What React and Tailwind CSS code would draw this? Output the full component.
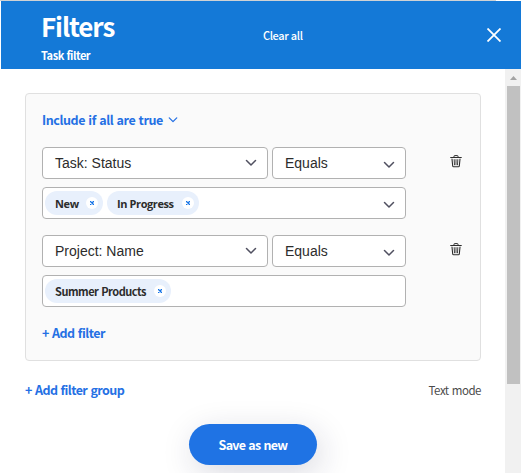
import React from "react";

const CLEAN = "font-['Noto_Sans_CJK_SC','Noto_Sans',sans-serif]";
const ARIAL = "font-['Liberation_Sans',Arial,sans-serif]";

function Chevron({ className = "", size = 12 }) {
  return (
    <svg className={className} width={size} height={size} viewBox="0 0 12 12" fill="none" stroke="currentColor" strokeWidth="1.5" strokeLinecap="round" strokeLinejoin="round">
      <path d="M1.5 3.5 6 8l4.5-4.5" />
    </svg>
  );
}

function Trash() {
  return (
    <svg width="12" height="13" viewBox="0 0 12 13" fill="none" stroke="#2c2c2c" strokeLinecap="round">
      <path d="M.7 2.5h10.6" strokeWidth="1.1" />
      <path d="M4 2.3V1.2Q4 .6 4.6.6h2.8Q8 .6 8 1.2v1.1" strokeWidth="1" />
      <path d="M2 4l.7 7q.1.8.9.8h4.8q.8 0 .9-.8l.7-7" strokeWidth="1.1" />
      <path d="M4.2 4.6l.3 5.2M6 4.6v5.2M7.8 4.6l-.3 5.2" strokeWidth="1" stroke="#444" />
    </svg>
  );
}

function Select({ label, className, chevronClass }) {
  return (
    <div className={`flex h-8 items-center justify-between rounded-[4px] border border-[#b1b1b1] bg-white pl-3 ${className}`}>
      <span className={`${ARIAL} text-[14px] leading-4 whitespace-nowrap text-[#2c2c2c]`}>{label}</span>
      <Chevron className={`text-[#505060] ${chevronClass}`} />
    </div>
  );
}

function Chip({ label, className, textClass }) {
  return (
    <div className={`flex h-6 items-center justify-between rounded-full bg-[#e8f0fc] pr-[5px] pl-[10px] ${className}`}>
      <span className={`leading-4 font-bold whitespace-nowrap text-[#2c2c2c] ${textClass}`}>{label}</span>
      <span className="flex size-3 items-center justify-center rounded-full bg-white">
        <svg width="4" height="4" viewBox="0 0 4 4" stroke="#1473e6" strokeWidth="1.3">
          <path d="M0 0l4 4M4 0 0 4" />
        </svg>
      </span>
    </div>
  );
}

function Rule({ field, chips, expandable }) {
  return (
    <div className="flex justify-between pr-[18px]">
      <div className="flex w-[364px] flex-col gap-2">
        <div className="flex gap-1">
          <Select label={field} className="w-[226px]" chevronClass="mr-[10px]" />
          <Select label="Equals" className="w-[134px]" chevronClass="mr-[10px] mt-[3px]" />
        </div>
        <div className="flex h-8 items-center justify-between rounded-[4px] border border-[#b1b1b1] bg-white pr-[10px] pl-[2px]">
          <div className="flex gap-1">{chips}</div>
          {expandable && <Chevron className="mt-[3px] text-[#505060]" />}
        </div>
      </div>
      <button className="mt-2 h-[13px]"><Trash /></button>
    </div>
  );
}

export default function App() {
  return (
    <div className={`${CLEAN} flex h-[473px] w-[521px] flex-col overflow-hidden bg-white`}>
      <div className="h-px w-[496px] shrink-0 bg-[#cfd2d4]" />
      <header className="ml-px flex h-[68px] shrink-0 items-start justify-between bg-[#1479d7] pr-5 pl-[40px] text-white">
        <div className="w-[222px]">
          <h1 className="pt-[9px] text-[26px] leading-8 font-bold tracking-[-1.1px]">Filters</h1>
          <p className="mt-[5px] text-[11px] leading-4 font-bold tracking-[-0.45px] [word-spacing:0.5px]">Task filter</p>
        </div>
        <button className="mt-[26px] mr-auto text-[11px] leading-4 font-medium tracking-[-0.4px] [word-spacing:0.5px] whitespace-nowrap">Clear all</button>
        <svg className="mt-[27px]" width="14" height="14" viewBox="0 0 14 14" stroke="white" strokeWidth="1.8">
          <path d="M.5.5l13 13M13.5.5l-13 13" />
        </svg>
      </header>

      <div className="flex min-h-0 flex-1">
        <main className="flex w-[505px] flex-col pt-6 pr-6 pl-[25px]">
          <section className="h-[268px] shrink-0 rounded-[4px] border border-[#e0e0e0] bg-[#fafafa] pl-4">
            <button className="mt-[18px] flex h-4 items-center gap-[5px] text-[12.5px] leading-4 font-bold tracking-[-0.42px] [word-spacing:0.9px] text-[#2470e4]">
              <span className="whitespace-nowrap">Include if all are true</span>
              <Chevron size={10} />
            </button>
            <div className="mt-[19px] flex flex-col gap-4">
              <Rule
                field="Task: Status"
                expandable
                chips={
                  <>
                    <Chip label="New" className="w-[58px]" textClass="font-['Open_Sans',sans-serif] text-[11px] tracking-[-0.4px] pt-px" />
                    <Chip label="In Progress" className="w-[92px]" textClass="font-['Open_Sans',sans-serif] text-[11px] tracking-[-0.4px] pt-px" />
                  </>
                }
              />
              <Rule
                field="Project: Name"
                chips={<Chip label="Summer Products" className="w-[126px]" textClass="text-[11px] tracking-[-0.48px] [word-spacing:0.8px]" />}
              />
            </div>
            <button className="mt-[18px] block text-[12.5px] leading-4 font-bold tracking-[-0.52px] [word-spacing:0.9px] whitespace-nowrap text-[#2470e4]">+ Add filter</button>
          </section>
          <div className="mt-[21px] flex items-center justify-between">
            <button className="text-[12.5px] leading-4 font-bold tracking-[-0.57px] [word-spacing:0.9px] whitespace-nowrap text-[#2470e4]">+ Add filter group</button>
            <button className="text-[11.5px] leading-4 tracking-[-0.45px] [word-spacing:0.8px] whitespace-nowrap text-[#4b4b4b]">Text mode</button>
          </div>
          <button className="mt-[26px] ml-[164px] h-[41px] w-32 shrink-0 rounded-full bg-[#1f73e4] pt-px text-[12.5px] leading-4 font-bold tracking-[-0.7px] [word-spacing:0.9px] whitespace-nowrap text-white shadow-[4px_8px_32px_rgba(30,30,70,0.17)]">
            Save as new
          </button>
        </main>
        <div className="flex w-4 flex-col items-center bg-[#f1f1f1]">
          <div className="flex h-[17px] items-center">
            <svg width="7" height="4" viewBox="0 0 7 4"><path d="M0 4 3.5 0 7 4z" fill="#a3a3a3" /></svg>
          </div>
          <div className="h-[298px] w-[13px] bg-[#c1c1c1]" />
        </div>
      </div>
    </div>
  );
}
